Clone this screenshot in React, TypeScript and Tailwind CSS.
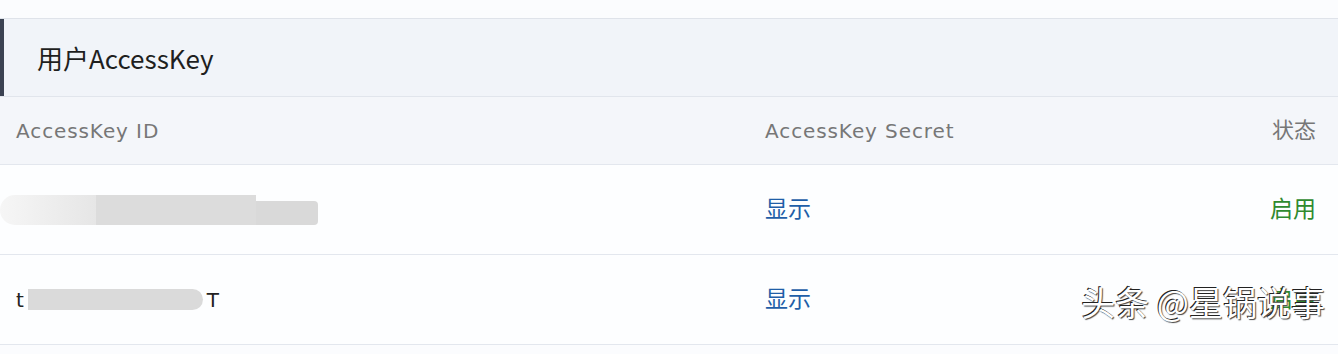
import React from "react";

const cjk = '"DejaVu Sans", "Noto Sans CJK SC", sans-serif';

const rows = [
  { id: "row1", secret: "显示", status: "启用" },
  { id: "row2", secret: "显示", status: "启用" },
];

const MaskedId = ({ variant }: { variant: string }) => {
  if (variant === "row1") {
    return (
      <div className="flex items-center -ml-4">
        <div className="h-[30px] w-[96px] rounded-l-full bg-gradient-to-r from-[#f6f6f6] to-[#e6e6e6]" />
        <div className="h-[30px] w-[160px] bg-[#dcdcdc]" />
        <div className="h-[24px] w-[62px] mt-[6px] rounded-r-sm bg-[#d9d9d9]" />
      </div>
    );
  }
  return (
    <div className="flex items-center text-[20px] text-[#222]" style={{ fontFamily: cjk }}>
      <span>t</span>
      <div className="ml-[4px] h-[21px] w-[175px] rounded-r-xl bg-[#dadada]" />
      <span className="ml-[4px]">T</span>
    </div>
  );
};

export default function App() {
  return (
    <div className="relative w-[1338px] h-[354px] overflow-hidden bg-[#fbfcfe]">
      <div className="h-[18px]" />
      <div className="border-t border-[#dfe3ea]">
        <div className="flex h-[77px] items-center bg-[#f1f4f9] border-l-[4px] border-[#3b4252]">
          <span
            className="pl-[33px] text-[26px] text-[#1f1f1f]"
            style={{ fontFamily: '"Noto Sans CJK SC", "Noto Sans", sans-serif' }}
          >
            用户AccessKey
          </span>
        </div>
      </div>
      <div
        className="grid grid-cols-[749px_1fr_auto] items-center h-[68px] pl-4 pr-[22px] bg-[#f4f6fa] border-t border-[#e1e5ec] text-[20px] text-[#777]"
        style={{ fontFamily: cjk }}
      >
        <span className="tracking-[0.9px]">AccessKey ID</span>
        <span className="tracking-[0.9px]">AccessKey Secret</span>
        <span className="text-[22px] text-[#777]">状态</span>
      </div>
      {rows.map((r) => (
        <div
          key={r.id}
          className="grid grid-cols-[749px_1fr_auto] items-center h-[90px] pl-4 pr-[22px] bg-[#fdfeff] border-t border-[#e3e7ee]"
          style={{ fontFamily: cjk }}
        >
          <MaskedId variant={r.id} />
          <span className="text-[23px] text-[#1f5ea8]">{r.secret}</span>
          <span className="text-[23px] text-[#2f8a2f]">{r.status}</span>
        </div>
      ))}
      <div className="border-t border-[#e3e7ee] h-[10px] bg-[#fbfcfe]" />
      <div
        className="absolute right-[13px] top-[276px] text-[34px] text-white"
        style={{
          fontFamily: '"Noto Sans CJK SC", sans-serif',
          textShadow: "-1px -1px 0 #222, 1px 1px 1px #444",
        }}
      >
        头条 @星锅说事
      </div>
    </div>
  );
}
